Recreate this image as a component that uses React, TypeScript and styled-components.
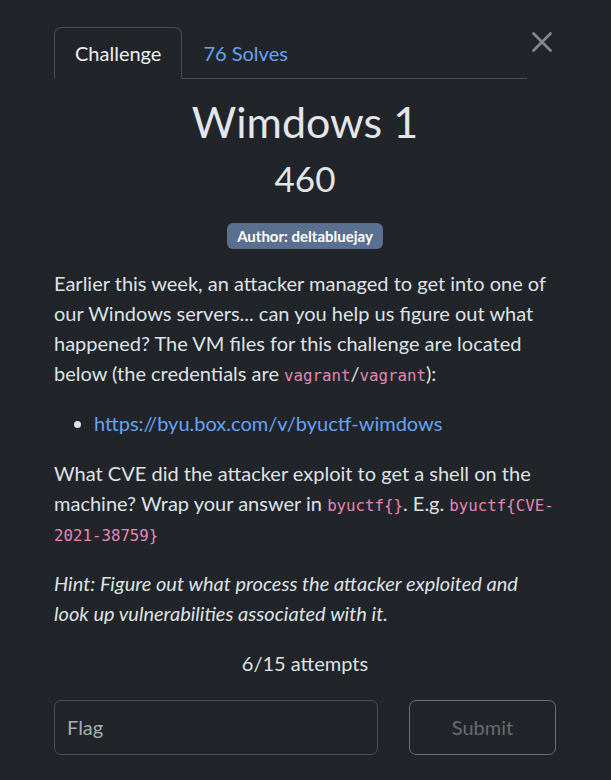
import React from "react";
import styled, { createGlobalStyle } from "styled-components";

const GlobalStyle = createGlobalStyle`
  html, body {
    margin: 0;
    padding: 0;
    background: #212529;
  }
  body {
    font-family: Lato, "Noto Sans", "Liberation Sans", sans-serif;
    color: #dee2e6;
    font-size: 20px;
  }
  * { box-sizing: border-box; }
`;

const Modal = styled.div`
  padding: 27px 55px 24px 54px;
  min-height: 780px;
`;

const Header = styled.div`
  display: flex;
  align-items: flex-start;
`;

const TabList = styled.ul`
  flex: 1;
  display: flex;
  list-style: none;
  margin: 0;
  padding: 0;
  border-bottom: 1px solid #495057;
`;

const Tab = styled.li<{ $active?: boolean }>`
  margin-bottom: -1px;
  padding: 10px 20px;
  line-height: 30px;
  font-size: 20px;
  border: 1px solid ${(p) => (p.$active ? "#495057" : "transparent")};
  border-bottom-color: ${(p) => (p.$active ? "#212529" : "transparent")};
  border-radius: 7px 7px 0 0;
  color: ${(p) => (p.$active ? "#eef0f2" : "#66a3f5")};
  background: ${(p) => (p.$active ? "#212529" : "transparent")};
`;

const CloseButton = styled.button`
  width: 29px;
  height: 29px;
  padding: 5px 0 0;
  border: 0;
  background: transparent;
  display: flex;
  align-items: flex-start;
  justify-content: center;
`;

const Title = styled.h1`
  margin: 17.4px 0 0;
  text-align: center;
  font-size: 43px;
  line-height: 1.2;
  font-weight: 400;
  color: #e3e6ea;
`;

const Points = styled.div`
  margin-top: 9.5px;
  text-align: center;
  font-size: 35px;
  line-height: 1.2;
  color: #e3e6ea;
`;

const BadgeRow = styled.div`
  display: flex;
  justify-content: center;
  margin-top: 24px;
`;

const Badge = styled.span`
  display: inline-block;
  background: #5b6f8e;
  color: #fff;
  font-weight: 700;
  font-size: 15px;
  line-height: 15px;
  padding: 5.25px 9.75px;
  border-radius: 6px;
`;

const Description = styled.div`
  margin-top: 19.5px;
  line-height: 30px;
  font-size: 20px;
  color: #dee2e6;
`;

const Para = styled.p<{ $italic?: boolean }>`
  margin: 0 0 20px;
  font-style: ${(p) => (p.$italic ? "italic" : "normal")};
`;

const List = styled.ul`
  margin: 0 0 20px;
  padding-left: 40px;
`;

const Link = styled.a`
  color: #66a3f5;
  text-decoration: none;
`;

const Code = styled.code`
  font-family: "DejaVu Sans Mono", "Liberation Mono", monospace;
  font-size: 15.75px;
  line-height: 1;
  color: #e685b5;
  word-wrap: break-word;
`;

const Attempts = styled.div`
  text-align: center;
  line-height: 30px;
  font-size: 20px;
  color: #dee2e6;
`;

const FormRow = styled.div`
  margin-top: 21.5px;
  display: flex;
  gap: 31px;
`;

const FlagInput = styled.input`
  flex: 1;
  min-width: 0;
  height: 55px;
  padding: 0 12px;
  font-family: Lato, "Noto Sans", sans-serif;
  font-size: 20px;
  background: #212529;
  border: 1px solid #4b5056;
  border-radius: 7px;
  color: #dee2e6;
  outline: none;
  &::placeholder {
    color: #a8aeb4;
  }
`;

const SubmitButton = styled.button`
  width: 147px;
  height: 55px;
  font-family: Lato, "Noto Sans", sans-serif;
  font-size: 20px;
  background: transparent;
  border: 1px solid #6c7177;
  border-radius: 7px;
  color: #656c73;
`;

export default function App() {
  return (
    <>
      <GlobalStyle />
      <Modal>
        <Header>
          <TabList>
            <Tab $active>Challenge</Tab>
            <Tab>76 Solves</Tab>
          </TabList>
          <CloseButton aria-label="Close">
            <svg width="20" height="20" viewBox="0 0 20 20">
              <path
                d="M1.5 1.5 L18.5 18.5 M18.5 1.5 L1.5 18.5"
                stroke="#85898e"
                strokeWidth="2.6"
                strokeLinecap="round"
              />
            </svg>
          </CloseButton>
        </Header>
        <Title>Wimdows 1</Title>
        <Points>460</Points>
        <BadgeRow>
          <Badge>Author: deltabluejay</Badge>
        </BadgeRow>
        <Description>
          <Para>
            Earlier this week, an attacker managed to get into one of our Windows
            servers... can you help us figure out what happened? The VM files for
            this challenge are located below (the credentials are{" "}
            <Code>vagrant</Code>/<Code>vagrant</Code>):
          </Para>
          <List>
            <li>
              <Link href="#">https://byu.box.com/v/byuctf-wimdows</Link>
            </li>
          </List>
          <Para>
            What CVE did the attacker exploit to get a shell on the machine? Wrap
            your answer in <Code>byuctf{"{}"}</Code>. E.g.{" "}
            <Code>byuctf{"{CVE-2021-38759}"}</Code>
          </Para>
          <Para $italic>
            Hint: Figure out what process the attacker exploited and look up
            vulnerabilities associated with it.
          </Para>
        </Description>
        <Attempts>6/15 attempts</Attempts>
        <FormRow>
          <FlagInput placeholder="Flag" />
          <SubmitButton>Submit</SubmitButton>
        </FormRow>
      </Modal>
    </>
  );
}
